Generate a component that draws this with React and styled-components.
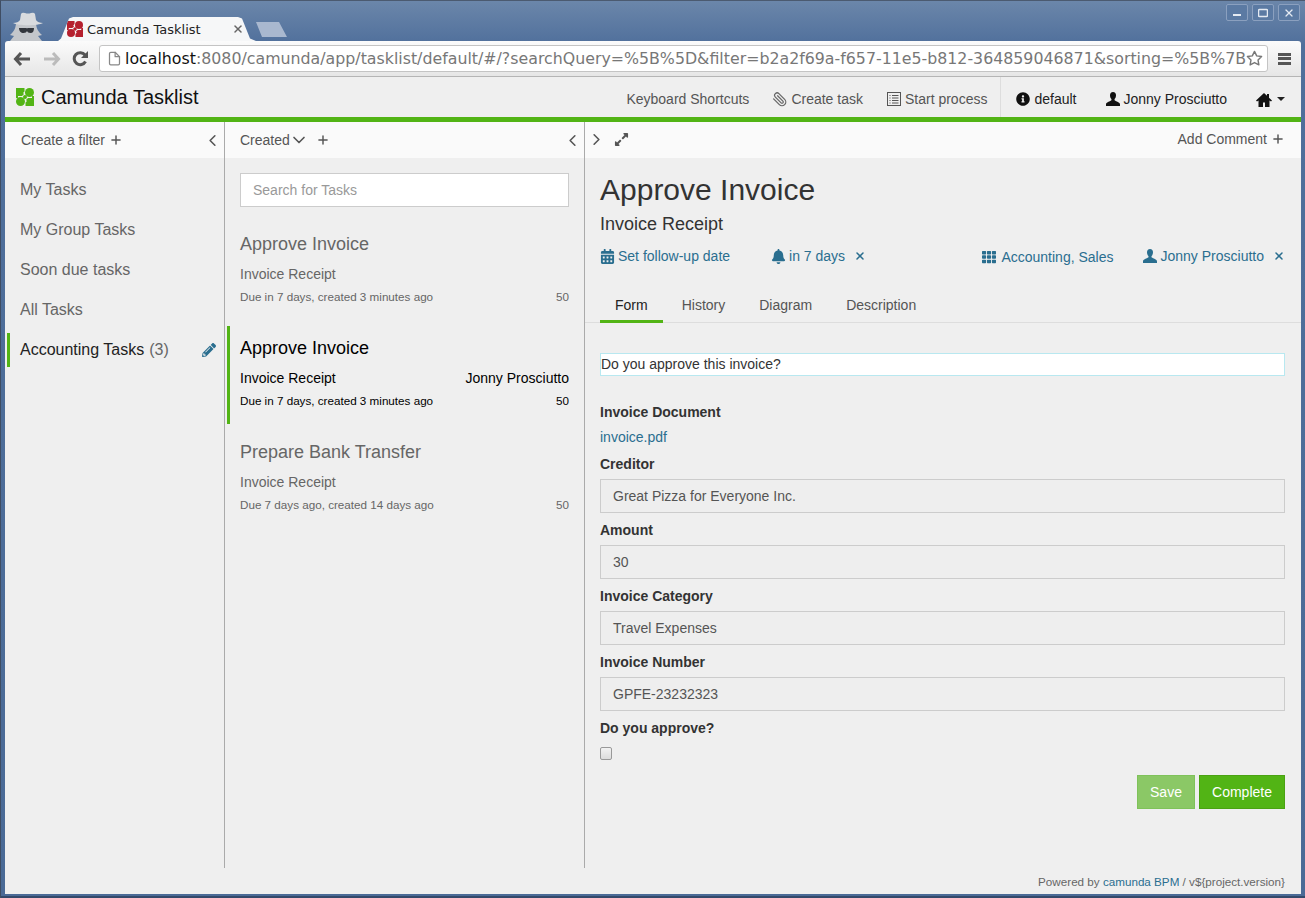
import React from 'react'
import styled, { createGlobalStyle } from 'styled-components'
import { FaBell, FaCalendarAlt, FaInfoCircle, FaPencilAlt, FaTh, FaExpandAlt } from 'react-icons/fa'
import { FiChevronDown, FiChevronLeft, FiChevronRight, FiPlus, FiX, FiFile, FiStar, FiPaperclip } from 'react-icons/fi'

const GlobalStyle = createGlobalStyle`
  html, body {
    margin: 0;
    padding: 0;
    background: #4a6a96;
  }
  * { box-sizing: border-box; }
  body {
    font-family: "Liberation Sans", Arial, sans-serif;
    font-size: 14px;
    color: #333;
  }
`

const Win = styled.div`
  width: 1305px;
  height: 898px;
  overflow: hidden;
  display: flex;
  flex-direction: column;
  padding: 0 4px 4px 4px;
  background: linear-gradient(#6b86aa 0, #4f6f9b 45px, #4a6a96 100%);
  border-top: 1px solid #4b5a70;
  border-left: 1px solid #3f4d63;
  box-shadow: inset 0 -2px 0 #34496a;
`

/* ---------- browser chrome ---------- */
const TitleBar = styled.div`
  height: 40px;
  flex: none;
  display: flex;
  align-items: flex-end;
  padding-left: 3px;
`
const Spy = styled.svg`
  width: 46px;
  height: 36px;
  flex: none;
`
const Tab = styled.div`
  width: 198px;
  height: 24px;
  margin-left: 4px;
  flex: none;
  display: flex;
  align-items: center;
  padding: 0 12px 0 9px;
  gap: 4px;
  background: #f6f7f8;
  clip-path: polygon(0 100%, 3px 90%, 11px 6%, 15px 0, 180px 0, 184px 6%, 192px 90%, 198px 100%);
  font-family: "DejaVu Sans", sans-serif;
  font-size: 13px;
  color: #222;
`
const TabTitle = styled.span`
  flex: 1;
  white-space: nowrap;
`
const NewTab = styled.div`
  width: 31px;
  height: 15px;
  margin: 0 0 4px 0;
  background: #a9b8cf;
  clip-path: polygon(6px 100%, 0 0, 23px 0, 31px 100%);
`
const WinButtons = styled.div`
  margin: 3px 1px 0 auto;
  align-self: flex-start;
  display: flex;
  gap: 4px;
`
const WinButton = styled.div`
  width: 22px;
  height: 17px;
  display: flex;
  align-items: center;
  justify-content: center;
  border: 1px solid #8ba0bf;
  border-radius: 2px;
  background: #5b7aa3;
  color: #e4eaf2;
`
const Toolbar = styled.div`
  height: 36px;
  flex: none;
  display: flex;
  align-items: center;
  padding-right: 6px;
  background: linear-gradient(#fbfbfb, #e6e6e6);
  border-bottom: 1px solid #b5b5b5;
  border-radius: 3px 3px 0 0;
`
const NavBtn = styled.svg`
  width: 18px;
  height: 16px;
  flex: none;
  margin-left: ${p => p.$ml}px;
`
const Omnibox = styled.div`
  width: 1169px;
  height: 27px;
  margin-left: 9px;
  flex: none;
  display: flex;
  align-items: center;
  padding: 0 4px 0 7px;
  background: #fff;
  border: 1px solid #c4c4c4;
  border-radius: 3px;
  color: #777;
  font-family: "DejaVu Sans", sans-serif;
  font-size: 15.8px;
  white-space: nowrap;
`
const Url = styled.div`
  flex: 1;
  margin-left: 3px;
  overflow: hidden;
`
const Host = styled.span`
  color: #111;
`
const Burger = styled.div`
  width: 13px;
  margin-left: 10px;
  flex: none;
  height: 12px;
  border-top: 3px solid #555;
  border-bottom: 3px solid #555;
  display: flex;
  align-items: center;
  &::before {
    content: '';
    width: 100%;
    height: 3px;
    background: #555;
  }
`

/* ---------- app navbar ---------- */
const AppArea = styled.div`
  flex: 1;
  min-height: 0;
  display: flex;
  flex-direction: column;
  background: #efefef;
`
const Navbar = styled.div`
  height: 45px;
  flex: none;
  display: flex;
  align-items: stretch;
  background: #efefef;
  border-bottom: 5px solid #52b415;
`
const Brand = styled.div`
  display: flex;
  align-items: center;
  gap: 7px;
  padding-left: 11px;
  font-size: 20px;
  color: #111;
`
const NavRight = styled.div`
  margin-left: auto;
  display: flex;
  align-items: center;
  font-size: 14px;
  color: #555;
  padding-top: 4px;
`
const NavItem = styled.span`
  display: inline-flex;
  align-items: center;
  gap: ${p => p.$gap ?? 4}px;
  margin-left: ${p => p.$ml}px;
  color: ${p => (p.$dark ? '#222' : '#555')};
  white-space: nowrap;
`
const NavDivider = styled.div`
  width: 1px;
  align-self: stretch;
  margin: -4px 0 0 13px;
  background: #ddd;
`
const Caret = styled.span`
  width: 0;
  height: 0;
  border-left: 4px solid transparent;
  border-right: 4px solid transparent;
  border-top: 4px solid #222;
  margin-right: 16px;
`

/* ---------- columns ---------- */
const Columns = styled.div`
  flex: 1;
  min-height: 0;
  display: flex;
`
const Column = styled.div`
  width: ${p => p.$w}px;
  flex: ${p => (p.$w ? 'none' : 1)};
  border-right: ${p => (p.$w ? '1px solid #aaa' : 'none')};
  display: flex;
  flex-direction: column;
`
const ColHead = styled.div`
  height: 36px;
  flex: none;
  display: flex;
  align-items: center;
  background: #fafafa;
  color: #555;
  font-size: 14px;
  padding: ${p => p.$pad};
`
const Push = styled.div`
  margin-left: auto;
  display: inline-flex;
  align-items: center;
`
const Filters = styled.div`
  padding-top: 15px;
  display: flex;
  flex-direction: column;
  gap: 6px;
`
const Filter = styled.div`
  height: 34px;
  margin-left: 2px;
  padding: 0 8px 0 10px;
  border-left: 3px solid ${p => (p.$active ? '#52b415' : 'transparent')};
  display: flex;
  align-items: center;
  font-size: 16px;
  color: ${p => (p.$active ? '#222' : '#666')};
`
const Count = styled.span`
  color: #666;
  margin-left: 5px;
`
const Search = styled.div`
  height: 34px;
  margin: 15px;
  padding: 0 12px;
  display: flex;
  align-items: center;
  background: #fff;
  border: 1px solid #ccc;
  color: #999;
`
const Tasks = styled.div`
  display: flex;
  flex-direction: column;
  gap: 6px;
`
const Task = styled.div`
  height: 98px;
  margin-left: 2px;
  padding: 9px 15px 0 10px;
  border-left: 3px solid ${p => (p.$active ? '#52b415' : 'transparent')};
  color: ${p => (p.$active ? '#000' : '#666')};
`
const TaskTitle = styled.div`
  font-size: 18px;
  line-height: 26px;
`
const TaskRow = styled.div`
  display: flex;
  justify-content: space-between;
  line-height: 20px;
  margin-top: ${p => p.$mt}px;
  font-size: ${p => p.$size}px;
`

/* ---------- detail ---------- */
const Detail = styled.div`
  padding: 0 16px 0 15px;
  flex: 1;
`
const H1 = styled.h1`
  margin: 15px 0 0;
  font-size: 30px;
  font-weight: 400;
  line-height: 34px;
  color: #333;
`
const H2 = styled.h2`
  margin: 5px 0 0;
  font-size: 18px;
  font-weight: 400;
  line-height: 24px;
  color: #333;
`
const Meta = styled.div`
  display: flex;
  align-items: center;
  margin-top: 10px;
  height: 20px;
  color: #2a6e8f;
`
const MetaItem = styled.span`
  display: inline-flex;
  align-items: center;
  gap: ${p => p.$gap ?? 5}px;
  margin-left: ${p => p.$ml}px;
  padding-top: ${p => p.$down ?? 0}px;
  white-space: nowrap;
`
const TabBar = styled.div`
  display: flex;
  gap: 34px;
  margin: 20px -16px 0 -15px;
  padding-left: 15px;
  height: 37px;
  border-bottom: 1px solid #ddd;
`
const TabLink = styled.div`
  height: 37px;
  padding: ${p => (p.$active ? '4px 15px 0' : '4px 0 0')};
  margin-right: ${p => (p.$active ? '-15px' : '0')};
  display: flex;
  align-items: center;
  color: ${p => (p.$active ? '#222' : '#555')};
  border-bottom: 3px solid ${p => (p.$active ? '#52b415' : 'transparent')};
`
const Intro = styled.div`
  margin-top: 30px;
  height: 23px;
  padding-bottom: 2px;
  display: flex;
  align-items: center;
  background: #fff;
  border: 1px solid #b8e8f0;
  color: #333;
`
const Label = styled.div`
  font-weight: 700;
  color: #333;
  line-height: 20px;
  margin-top: ${p => p.$mt ?? 7}px;
`
const PdfLink = styled.div`
  color: #2a6e8f;
  line-height: 20px;
  margin-top: 5px;
`
const Field = styled.div`
  height: 34px;
  margin-top: 5px;
  padding: 0 12px;
  display: flex;
  align-items: center;
  background: #eee;
  border: 1px solid #ccc;
  color: #555;
`
const Check = styled.div`
  width: 12px;
  height: 13px;
  margin-top: 9px;
  background: linear-gradient(#f2f2f2, #dcdcdc);
  border: 1px solid #999;
  border-radius: 2px;
`
const Actions = styled.div`
  display: flex;
  justify-content: flex-end;
  gap: 4px;
  margin-top: 15px;
`
const Button = styled.div`
  height: 34px;
  padding: 0 12px;
  display: flex;
  align-items: center;
  justify-content: center;
  color: #fff;
  background: ${p => (p.$muted ? '#8bc866' : '#52b415')};
  border: 1px solid ${p => (p.$muted ? '#7fc25a' : '#4aa212')};
  min-width: ${p => (p.$muted ? '58px' : '86px')};
`
const Footer = styled.div`
  height: 26px;
  flex: none;
  padding: 7px 16px 0 0;
  text-align: right;
  font-size: 11.67px;
  color: #666;
`
const FooterLink = styled.span`
  color: #2a6e8f;
`

// glyphicons have no twin in the icon packs, so these few are drawn by hand
function UserIcon({ size = 14, color = 'currentColor' }) {
  return (
    <svg width={size} height={size} viewBox="0 0 14 14" fill={color}>
      <path d="M7 0C5 0 4 1.300 4 3.200c0 1.500.5 3 1.400 3.900.2.500.1 1.100-.2 1.500C4 9.600 0 10.200 0 12.500V14h14v-1.500c0-2.300-4-2.900-5.200-3.900-.3-.4-.4-1-.2-1.500C9.500 6.200 10 4.700 10 3.200 10 1.300 9 0 7 0z" />
    </svg>
  )
}

function HomeIcon() {
  return (
    <svg width="16" height="15" viewBox="0 0 16 15" fill="#111">
      <path d="M8 1 0 8.500 1 9.500 2.500 8.500V15H7V10.500H9V15H13.500V8.500L15 9.500 16 8.500 13 5.700V2H11V3.800z" />
    </svg>
  )
}

function ListIcon() {
  return (
    <svg width="14" height="14" viewBox="0 0 14 14" fill="none" stroke="#555">
      <rect x="0.500" y="0.500" width="13" height="13" strokeWidth="1" />
      <path d="M2.500 3.500h1m1.500 0h6.500M2.500 6h1m1.500 0h6.500M2.500 8.500h1m1.500 0h6.500M2.500 11h1m1.500 0h6.500" />
    </svg>
  )
}

function CamundaLogo({ color, size }) {
  return (
    <svg width={size} height={size} viewBox="0 0 18 18" fill={color}>
      <path d="M0 0h8.500v3.500L7 5l1 1-2 2H0z" />
      <circle cx="13.500" cy="4.500" r="4.500" />
      <circle cx="4.500" cy="13.500" r="4.500" />
      <path d="M18 18H9.500v-3.500L11 13l-1-1 2-2h6z" />
      <circle cx="9" cy="9" r="2" />
      <path d="M0 8h2v2H0zM16 8h2v2h-2z" />
    </svg>
  )
}

const tasks = [
  { title: 'Approve Invoice', due: 'Due in 7 days, created 3 minutes ago' },
  { title: 'Approve Invoice', due: 'Due in 7 days, created 3 minutes ago', active: true, who: 'Jonny Prosciutto' },
  { title: 'Prepare Bank Transfer', due: 'Due 7 days ago, created 14 days ago' },
]

const fields = [
  ['Creditor', 'Great Pizza for Everyone Inc.'],
  ['Amount', '30'],
  ['Invoice Category', 'Travel Expenses'],
  ['Invoice Number', 'GPFE-23232323'],
]

export default function App() {
  return (
    <>
      <GlobalStyle />
      <Win>
        <TitleBar>
          <Spy viewBox="0 0 46 36">
            <path d="M8 19H28C29 25 30 26 34 30L30 31 34 36H2L6 31 2 30C6 26 7 25 8 19z" fill="#c4c7cb" />
            <path d="M5 18C8 18 11 17 12 15L13 9Q14 7 17 8 20 9 23 8 26 7 27 9L28 15C29 17 32 18 35 18 30 21 10 21 5 18z" fill="#d9dbde" />
            <path d="M11 23h7c.5 0 .5 0 1 .8.5-.8.5-.8 1-.8h6c0 3-1 5-3.500 5-2 0-3-1-3.500-2-.5 1-1.500 2-3.500 2-2.500 0-4.500-2-4.500-5z" fill="#33373d" />
          </Spy>
          <Tab>
            <CamundaLogo color="#b5202e" size={16} />
            <TabTitle>Camunda Tasklist</TabTitle>
            <FiX size={12} strokeWidth={3} color="#666" />
          </Tab>
          <NewTab />
          <WinButtons>
            <WinButton><svg width="10" height="10"><rect x="1" y="6" width="8" height="2" fill="currentColor" /></svg></WinButton>
            <WinButton><svg width="10" height="10"><rect x="0.500" y="1.500" width="9" height="7" rx="1" fill="none" stroke="currentColor" strokeWidth="1.500" /></svg></WinButton>
            <WinButton><FiX size={12} strokeWidth={2.500} /></WinButton>
          </WinButtons>
        </TitleBar>
        <Toolbar>
          <NavBtn $ml={8} viewBox="0 0 18 16"><path d="M8 2 2.500 8 8 14M3 8h14" fill="none" stroke="#555" strokeWidth="3" /></NavBtn>
          <NavBtn $ml={12} viewBox="0 0 18 16"><path d="M10 2l5.500 6L10 14M15 8H1" fill="none" stroke="#bbb" strokeWidth="3" /></NavBtn>
          <NavBtn $ml={11} viewBox="0 0 18 16"><path d="M13.500 10.500A6 6 0 1 1 13 4" fill="none" stroke="#555" strokeWidth="3" /><path d="M16 0v7h-7z" fill="#555" /></NavBtn>
          <Omnibox>
            <FiFile size={15} color="#888" style={{ flex: 'none' }} />
            <Url><Host>localhost</Host>:8080/camunda/app/tasklist/default/#/?searchQuery=%5B%5D&filter=b2a2f69a-f657-11e5-b812-364859046871&sorting=%5B%7B</Url>
            <FiStar size={17} color="#777" style={{ flex: 'none' }} />
          </Omnibox>
          <Burger />
        </Toolbar>
        <AppArea>
          <Navbar>
            <Brand><CamundaLogo color="#52b415" size={18} />Camunda Tasklist</Brand>
            <NavRight>
              <NavItem>Keyboard Shortcuts</NavItem>
              <NavItem $ml={23}><FiPaperclip size={15} color="#666" style={{ transform: 'scaleX(-1)' }} />Create task</NavItem>
              <NavItem $ml={24}><ListIcon />Start process</NavItem>
              <NavDivider />
              <NavItem $ml={15} $dark><FaInfoCircle size={14} color="#111" />default</NavItem>
              <NavItem $ml={29} $dark><UserIcon size={14} color="#111" />Jonny Prosciutto</NavItem>
              <NavItem $ml={29} $dark $gap={5}><HomeIcon /><Caret /></NavItem>
            </NavRight>
          </Navbar>
          <Columns>
            <Column $w={220}>
              <ColHead $pad="0 2px 0 16px">
                Create a filter<FiPlus size={14} strokeWidth={2.500} style={{ marginLeft: 4 }} />
                <Push><FiChevronLeft size={19} /></Push>
              </ColHead>
              <Filters>
                <Filter>My Tasks</Filter>
                <Filter>My Group Tasks</Filter>
                <Filter>Soon due tasks</Filter>
                <Filter>All Tasks</Filter>
                <Filter $active>
                  Accounting Tasks<Count>(3)</Count>
                  <Push><FaPencilAlt size={14} color="#2a6e8f" /></Push>
                </Filter>
              </Filters>
            </Column>
            <Column $w={360}>
              <ColHead $pad="0 2px 0 15px">
                Created<FiChevronDown size={20} style={{ marginLeft: -1 }} />
                <FiPlus size={14} strokeWidth={2.500} style={{ marginLeft: 7 }} />
                <Push><FiChevronLeft size={19} /></Push>
              </ColHead>
              <Search>Search for Tasks</Search>
              <Tasks>
                {tasks.map((t, i) => (
                  <Task key={i} $active={t.active}>
                    <TaskTitle>{t.title}</TaskTitle>
                    <TaskRow $mt={7} $size={14}><span>Invoice Receipt</span><span>{t.who}</span></TaskRow>
                    <TaskRow $mt={3} $size={11.67}><span>{t.due}</span><span>50</span></TaskRow>
                  </Task>
                ))}
              </Tasks>
            </Column>
            <Column>
              <ColHead $pad="0 16px 2px 2px">
                <FiChevronRight size={19} />
                <FaExpandAlt size={15} style={{ marginLeft: 8 }} />
                <Push>Add Comment<FiPlus size={14} strokeWidth={2.500} style={{ marginLeft: 4 }} /></Push>
              </ColHead>
              <Detail>
                <H1>Approve Invoice</H1>
                <H2>Invoice Receipt</H2>
                <Meta>
                  <MetaItem $gap={3}><FaCalendarAlt size={15} />Set follow-up date</MetaItem>
                  <MetaItem $ml={41} $gap={3}><FaBell size={15} />in 7 days<FiX size={12} strokeWidth={3} style={{ marginLeft: 6 }} /></MetaItem>
                  <Push>
                    <MetaItem $down={1}><FaTh size={14} />Accounting, Sales</MetaItem>
                    <MetaItem $ml={29} $gap={4}><UserIcon size={14} />Jonny Prosciutto<FiX size={12} strokeWidth={3} style={{ marginLeft: 5 }} /></MetaItem>
                  </Push>
                </Meta>
                <TabBar>
                  <TabLink $active>Form</TabLink>
                  <TabLink>History</TabLink>
                  <TabLink>Diagram</TabLink>
                  <TabLink>Description</TabLink>
                </TabBar>
                <Intro>Do you approve this invoice?</Intro>
                <Label $mt={26}>Invoice Document</Label>
                <PdfLink>invoice.pdf</PdfLink>
                {fields.map(([label, value]) => (
                  <React.Fragment key={label}>
                    <Label>{label}</Label>
                    <Field>{value}</Field>
                  </React.Fragment>
                ))}
                <Label>Do you approve?</Label>
                <Check />
                <Actions>
                  <Button $muted>Save</Button>
                  <Button>Complete</Button>
                </Actions>
              </Detail>
            </Column>
          </Columns>
          <Footer>Powered by <FooterLink>camunda BPM</FooterLink> / v${'{'}project.version{'}'}</Footer>
        </AppArea>
      </Win>
    </>
  )
}
